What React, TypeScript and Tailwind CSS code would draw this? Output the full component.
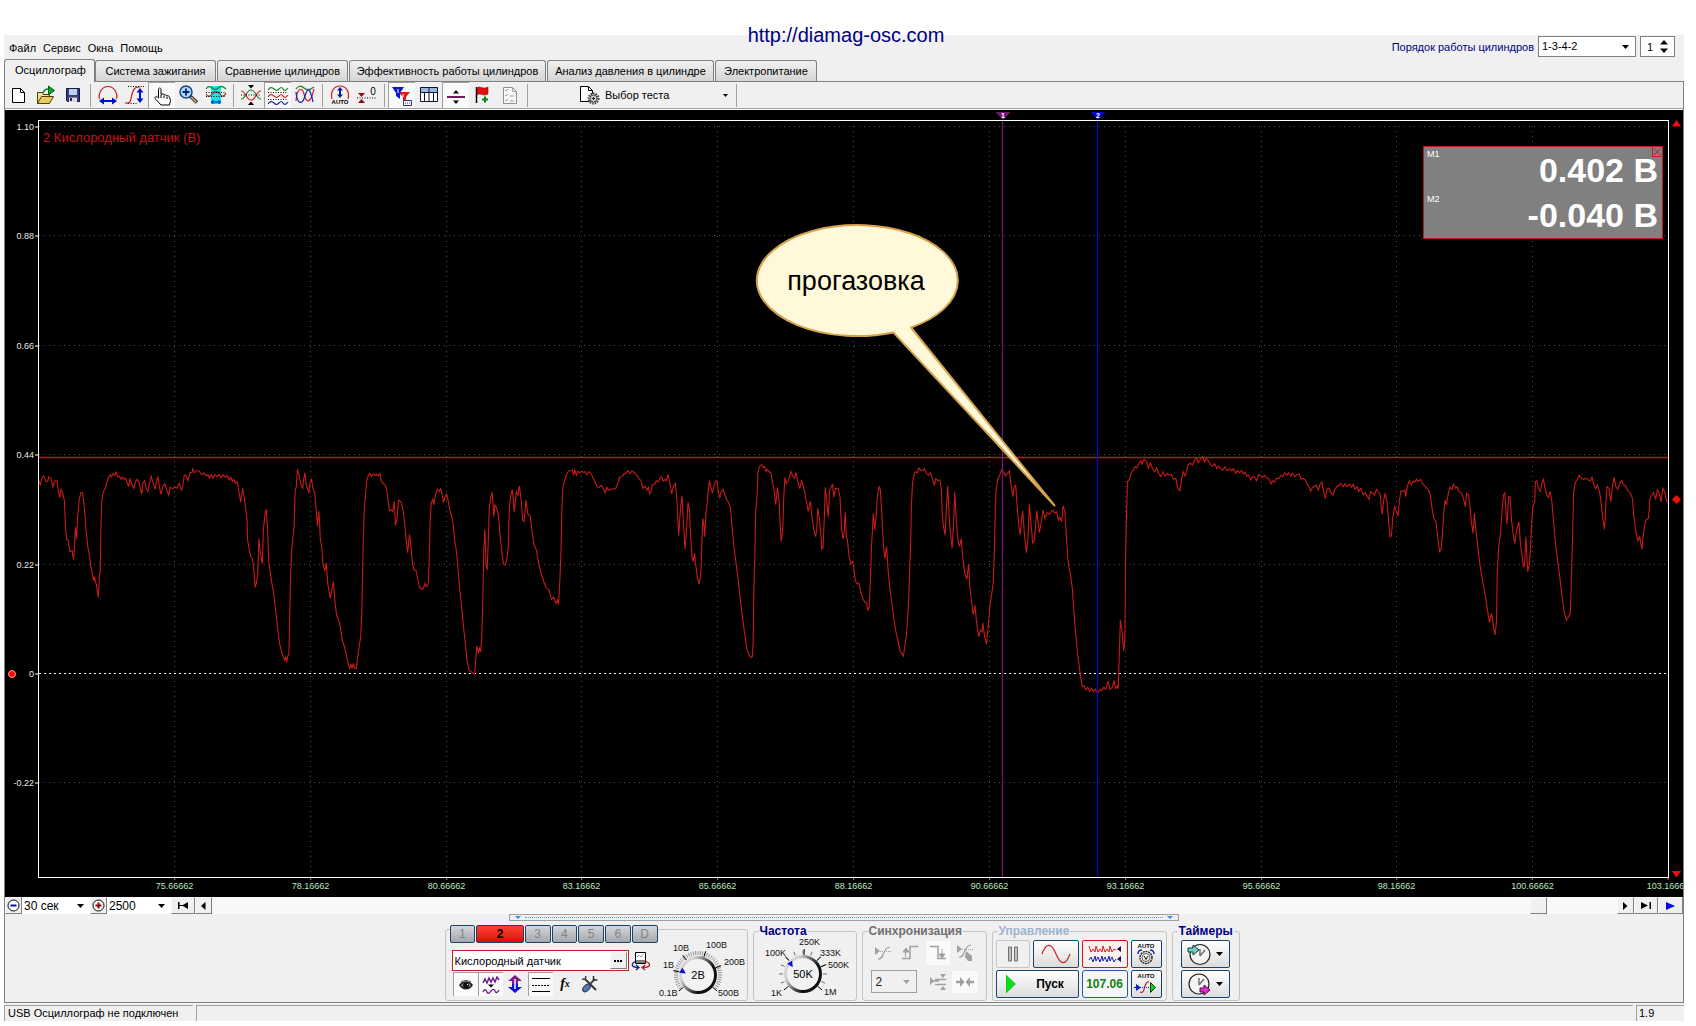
import React from "react";
import type { ReactNode } from "react";

/* ---------- chart data ---------- */

const PLOT_W = 1629;
const PLOT_H = 756;

const TRACE_A =
  "105,122 109,134 114,110 119,109 124,124 129,125 132,110 138,116 143,140 148,124 154,122 158,155 161,172 165,148 170,160 174,184 177,262 180,298 184,300 189,334 195,332 199,358 202,310 204,262 207,296 210,230 214,178 219,157 223,158 228,200 232,262 237,318 241,340 246,380 250,404 253,422 255,410 260,432 266,472 269,402 271,400 273,250 275,190 278,160 281,152 285,145 289,126 294,112 298,104 302,110 306,100 310,106 314,97 318,110 322,108 327,118 331,112 335,118 340,115 344,130 348,138 351,115 356,132 362,145 366,125 371,118 376,128 380,150 383,163 386,130 391,122 395,145 400,154 404,130 409,109 414,130 419,148 423,125 427,110 431,140 435,163 440,140 445,131 450,148 456,166 460,142 468,146 473,141 479,145 485,130 490,150 494,140 498,106 502,104 508,122 514,97 519,98 521,87 526,98 532,92 538,92 545,104 551,98 557,107 562,104 566,115 571,104 576,115 581,104 587,110 592,104 598,113 603,104 609,112 615,107 620,120 624,112 628,124 632,118 636,130 641,125 645,148 651,187 656,145 660,170 664,205 668,240 669,298 674,330 678,350 683,358 686,390 690,442 693,430 697,400 700,296 704,340 709,372 712,270 717,216 720,210 723,262 727,370 731,400 735,430 740,460 745,510 751,570 756,610 762,640 766,650 770,660 772,650 775,667 778,648 781,645 783,540 786,400 789,320 792,290 795,258 798,150 801,140 804,88 808,104 813,130 818,146 821,120 824,98 829,140 835,157 838,130 842,116 846,145 851,160 855,215 858,258 862,214 864,250 866,298 870,320 873,370 878,394 882,368 886,430 893,475 897,450 901,424 905,480 910,525 915,540 920,560 925,600 931,620 936,642 942,675 946,685 949,672 952,685 955,670 958,684 963,686 966,660 971,618 975,590 978,515 982,310 985,200 988,165 991,125 995,108 1000,100 1004,110 1008,102 1014,106 1018,103 1022,108 1027,100 1031,125 1036,130 1041,135 1046,150 1050,190 1053,212 1058,210 1062,215 1066,184 1069,256 1073,240 1077,180 1082,184 1086,190 1090,215 1095,260 1099,310 1102,338 1107,283 1111,320 1115,370 1119,390 1124,390 1129,415 1134,442 1139,448 1145,445 1149,430 1153,440 1158,432 1160,360 1163,240 1166,190 1170,178 1173,195 1178,160 1183,148 1187,155 1191,146 1195,160 1199,188 1203,170 1208,163 1213,190 1216,210 1220,225 1225,250 1229,300 1234,335 1238,380 1243,450 1248,500 1253,560 1258,610 1263,665 1268,690 1274,695 1279,700 1283,703 1286,660 1289,618 1293,638 1296,625 1299,636 1302,600 1305,500 1308,330 1311,268 1314,370 1317,390 1320,300 1323,200 1327,170 1331,157 1335,230 1338,195 1343,205 1348,230 1352,290 1357,340 1361,372 1366,375 1370,360 1374,325 1377,200 1381,165 1385,148 1390,215 1396,155 1400,165 1404,137 1409,180 1413,240 1417,245 1422,180 1427,222 1433,228 1438,270 1444,315 1450,330 1456,370 1463,400 1470,425 1476,442 1484,450 1491,478 1497,472 1503,490 1507,480 1510,492";
const TRACE_B =
  "0,415 3,320 5,210 8,140 13,120 19,100 24,92 30,92 33,90 37,104 40,90 44,106 48,94 53,98 58,94 63,97 68,95 73,104 78,95 83,100 88,110 94,125 100,140 106,142 112,136 117,145 122,158 126,142 131,150 138,148 144,146 150,146 156,132 161,112 167,110 173,102 179,98 184,92 189,101 195,92 201,98 207,104 213,115 219,122 224,145 230,138 235,150 239,142 242,162 246,155 249,136 256,132 261,122 266,125 271,114 275,110 279,124 284,118 288,122 292,104 296,124 302,162 306,140 312,130 316,180 319,250 321,287 326,200 330,168 333,230 338,328 342,270 346,187 350,210 353,290 357,350 360,365 364,340 367,375 371,410 376,432 381,400 383,320 386,235 389,255 391,290 395,215 398,190 401,150 404,122 407,140 412,157 416,140 420,124 424,122 428,155 432,172 436,155 441,148 446,165 451,180 456,188 461,204 465,260 470,320 476,370 482,420 487,475 493,530 499,580 505,625 511,645 516,653 520,650 522,610 524,455 527,340 529,210 533,160 535,100 539,80 545,74 550,82 553,80 557,95 560,88 565,95 570,98 575,130 578,145 583,194 588,142 592,180 595,250 598,305 602,270 605,170 608,112 612,130 617,122 620,115 624,94 629,108 634,115 638,98 643,125 648,146 653,122 658,138 662,160 667,190 671,214 677,184 681,230 686,270 691,290 694,270 697,205 702,240 708,328 711,325 715,220 717,142 720,170 725,230 729,150 734,140 737,132 740,172 745,145 752,146 757,170 761,265 765,296 768,280 771,215 774,290 777,300 781,345 786,372 791,365 794,380 798,420 803,432 808,430 813,455 818,475 824,486 829,490 833,512 836,500 839,430 842,320 845,260 847,220 851,270 854,235 858,170 862,140 866,148 870,220 874,310 878,356 883,320 887,390 892,450 897,490 903,540 908,575 914,605 920,635 924,640 928,648 933,615 937,580 941,510 944,430 948,310 950,200 953,130 957,105 960,95 966,98 970,84 976,92 981,92 985,86 990,100 996,106 1001,98 1006,112 1012,136 1016,116 1022,122 1027,120 1031,150 1033,220 1037,260 1041,286 1045,200 1048,137 1053,250 1060,325 1064,250 1067,157 1072,250 1076,300 1080,320 1085,296 1089,350 1094,400 1100,418 1105,372 1108,440 1112,480 1117,524 1122,496 1126,545 1132,590 1137,570 1141,575 1143,548 1148,590 1153,612 1158,560 1162,500 1168,455 1171,430 1174,340 1177,200 1179,150 1184,115 1189,105 1194,88 1199,95 1204,107 1210,100 1215,92 1219,130 1224,170 1228,140 1232,136 1236,200 1240,255 1244,284 1248,240 1251,212 1256,290 1261,338 1265,300 1269,193 1274,260 1278,310 1283,300 1286,250 1289,212 1296,278 1302,240 1306,210 1311,235 1317,218 1323,222 1328,215 1333,210 1338,220 1343,215 1347,240 1351,232 1356,245 1360,198 1365,215 1369,290 1373,360 1377,390 1381,410 1385,445 1389,510 1394,580 1399,640 1404,680 1408,715 1412,740 1417,738 1422,750 1427,742 1432,754 1437,745 1442,755 1447,748 1454,760 1460,748 1465,752 1470,742 1475,748 1482,725 1487,748 1493,742 1498,722 1502,745 1506,738 1509,747 1512,640 1515,540 1519,570 1524,634 1527,600 1528,500 1529,350 1532,200 1534,130";
const TRACE_C =
  "20,125 25,120 30,100 36,90 41,80 46,84 52,70 57,62 60,72 66,58 72,65 77,85 83,70 88,84 95,95 100,84 105,100 111,110 117,95 123,108 129,100 135,106 140,104 146,118 152,115 157,145 163,152 168,115 172,95 177,108 181,95 185,75 191,70 197,75 203,60 208,55 213,68 219,58 225,50 230,66 235,55 240,62 246,74 252,78 258,72 264,86 269,78 275,88 280,90 286,80 292,92 298,86 304,92 309,86 315,100 320,92 325,98 331,92 336,102 341,96 345,108 350,106 356,120 361,110 367,112 372,122 377,104 383,108 388,112 394,106 399,115 405,115 411,132 416,122 421,126 426,115 432,116 438,106 443,110 448,98 454,106 459,98 465,108 470,100 476,110 482,104 488,102 493,118 499,115 505,120 510,135 515,140 519,154 524,142 530,138 535,136 540,150 545,132 550,126 555,160 559,175 564,145 569,145 574,158 580,165 584,150 590,140 596,136 601,130 607,140 612,132 618,140 625,133 630,142 635,133 640,148 645,140 650,154 656,145 662,165 668,158 674,170 678,178 682,155 688,160 693,165 698,148 704,155 709,165 711,200 714,222 718,180 722,160 727,185 731,240 735,290 739,288 743,230 748,200 753,215 757,228 761,180 765,152 770,155 775,150 778,170 782,140 788,122 793,135 798,124 803,126 807,118 812,124 818,118 823,130 829,138 835,145 840,150 845,165 849,200 854,235 860,245 865,290 870,335 874,330 878,280 882,210 885,180 889,195 893,165 898,142 904,148 908,133 914,145 918,140 923,155 930,160 935,175 940,200 944,160 949,165 953,200 957,250 961,280 965,220 969,270 975,330 982,390 989,435 995,470 1001,515 1006,548 1011,520 1015,545 1018,570 1021,585 1025,545 1027,400 1031,320 1036,280 1040,215 1044,165 1048,158 1051,220 1054,252 1058,170 1062,170 1066,240 1071,285 1075,310 1080,270 1086,245 1090,310 1095,350 1098,380 1101,378 1105,290 1110,395 1115,370 1118,320 1121,250 1124,200 1129,185 1131,125 1135,122 1139,145 1144,154 1149,130 1153,118 1157,145 1162,165 1166,172 1171,155 1176,185 1180,240 1185,305 1190,350 1196,400 1202,455 1209,515 1215,540 1221,530 1226,520 1230,380 1233,250 1235,160 1239,130 1244,120 1250,106 1256,115 1262,118 1269,115 1275,120 1280,122 1285,112 1290,135 1295,146 1300,135 1306,158 1310,190 1315,240 1319,268 1323,190 1326,140 1331,145 1336,185 1341,140 1345,112 1350,140 1355,148 1360,132 1365,122 1370,132 1377,140 1383,152 1389,158 1395,175 1399,230 1404,275 1410,302 1415,290 1421,328 1426,270 1432,240 1439,235 1443,175 1448,165 1453,158 1458,178 1463,150 1468,160 1473,185 1478,145 1483,155 1487,180 1491,188";

/* Sample blocks share the vertical scale; each has its own time origin. */
function toPlot(block: string, originX: number, scaleX: number) {
  return block.split(" ").map((pair) => {
    const [x, y] = pair.split(",").map(Number);
    return `${(originX + x * scaleX).toFixed(1)},${(319 + y / 3).toFixed(1)}`;
  });
}
const TRACE = [
  ...toPlot(TRACE_A, -39, 0.3699),
  ...toPlot(TRACE_B, 521, 0.3699),
  ...toPlot(TRACE_C, 1081, 0.3673),
].join(" ");

const Y_AXIS = [
  { label: "1.10", y: 5.5 },
  { label: "0.88", y: 114.5 },
  { label: "0.66", y: 224.5 },
  { label: "0.44", y: 333.5 },
  { label: "0.22", y: 443.5 },
  { label: "0", y: 552.5 },
  { label: "-0.22", y: 661.5 },
];
const X_AXIS = [
  { label: "75.66662", x: 135.5 },
  { label: "78.16662", x: 271.5 },
  { label: "80.66662", x: 407.5 },
  { label: "83.16662", x: 542.5 },
  { label: "85.66662", x: 678.5 },
  { label: "88.16662", x: 814.5 },
  { label: "90.66662", x: 950.5 },
  { label: "93.16662", x: 1086.5 },
  { label: "95.66662", x: 1222.5 },
  { label: "98.16662", x: 1357.5 },
  { label: "100.66662", x: 1493.5 },
  { label: "103.16662", x: 1629 },
];
const MARKERS = [
  { id: "1", x: 963.5, color: "#701a70" },
  { id: "2", x: 1058.5, color: "#0808d0" },
];
const pct = (v: number, total: number) => `${(v / total) * 100}%`;

/* ---------- small parts ---------- */

function Icon({ w = 24, h = 22, children }: { w?: number; h?: number; children: ReactNode }) {
  return (
    <svg width={w} height={h} viewBox={`0 0 ${w} ${h}`} fill="none" className="shrink-0" aria-hidden="true">
      {children}
    </svg>
  );
}

function Down({ color = "#000" }: { color?: string }) {
  return (
    <Icon w={7} h={4}>
      <path d="M0 0h7L3.500 4z" fill={color} />
    </Icon>
  );
}

function ToolButton({ label, pressed, children }: { label: string; pressed?: boolean; children: ReactNode }) {
  return (
    <button
      type="button"
      aria-label={label}
      aria-pressed={pressed}
      className={
        pressed
          ? "flex h-[26px] w-[27px] items-center justify-center border-l border-t border-[#a0a0a0] bg-[#fafafa]"
          : "flex h-[26px] w-[27px] items-center justify-center"
      }
    >
      {children}
    </button>
  );
}

function Sep() {
  return (
    <div className="flex w-2 justify-center py-[2px]">
      <div className="w-px bg-[#a0a0a0]" />
    </div>
  );
}

/* ---------- header ---------- */

function Header() {
  return (
    <header className="flex h-6 items-start justify-between bg-[#f0f0f0]">
      <nav className="flex gap-[7px] pl-[5px] pt-[6px]" aria-label="Меню">
        {["Файл", "Сервис", "Окна", "Помощь"].map((m) => (
          <button key={m} type="button" className="leading-[14px]">
            {m}
          </button>
        ))}
      </nav>
      <div className="flex items-center gap-1 pr-[9px] pt-px">
        <label htmlFor="order" className="text-[#000080]">
          Порядок работы цилиндров
        </label>
        <span className="relative flex h-[21px] w-[98px] items-center border border-[#808080] bg-white">
          <select id="order" className="h-full w-full appearance-none bg-transparent px-[3px] pb-[2px] outline-none">
            <option>1-3-4-2</option>
          </select>
          <span className="pointer-events-none absolute right-[6px]">
            <Down />
          </span>
        </span>
        <span className="flex h-[21px] w-[35px] items-center justify-between border border-[#808080] bg-white pl-[6px] pr-[6px]">
          <input aria-label="Номер" defaultValue="1" className="w-3 bg-transparent outline-none" />
          <Icon w={8} h={13}>
            <path d="M0 4.500h8L4 0zM0 8.500h8L4 13z" fill="#000" />
          </Icon>
        </span>
      </div>
    </header>
  );
}

const TABS: [string, string][] = [
  ["Система зажигания", "w-[121px]"],
  ["Сравнение цилиндров", "w-[131px]"],
  ["Эффективность работы цилиндров", "w-[197px]"],
  ["Анализ давления в цилиндре", "w-[167px]"],
  ["Электропитание", "w-[102px]"],
];

function Tabs() {
  return (
    <div role="tablist" className="flex h-[23px] items-end bg-[#f0f0f0]">
      <button
        type="button"
        role="tab"
        aria-selected="true"
        className="h-[23px] w-[91px] rounded-t-[3px] border border-b-0 border-[#808080] bg-[#f0f0f0] pb-[2px] pl-[2px]"
      >
        Осциллограф
      </button>
      <div className="flex h-full grow items-end gap-px border-b border-[#808080]">
        {TABS.map(([t, w]) => (
          <button
            key={t}
            type="button"
            role="tab"
            aria-selected="false"
            className={`${w} h-[21px] rounded-t-[3px] border border-b-0 border-[#808080] bg-linear-to-b from-[#f2f2f2] to-[#d4d4d4]`}
          >
            {t}
          </button>
        ))}
      </div>
    </div>
  );
}

/* ---------- toolbar ---------- */

function Toolbar() {
  return (
    <div className="flex h-7 shrink-0 border-b border-b-white bg-[#f0f0f0] shadow-[inset_0_-1px_0_#a0a0a0]" role="toolbar">
      <ToolButton label="Новый">
        <Icon>
          <path d="M5.500 4.500h8l4 4v10h-12z" fill="#fff" stroke="#000" />
          <path d="M13.500 4.500v4h4" stroke="#000" />
        </Icon>
      </ToolButton>
      <ToolButton label="Открыть">
        <Icon>
          <path d="M3.500 19.500v-11h5l1 2h6v3" fill="#e8e0a0" stroke="#504000" />
          <path d="M3.500 19.500l4-7h12l-4 7z" fill="#e8cc60" stroke="#504000" />
          <path d="M14.500 2v9l6-4.500z" fill="#10a030" stroke="#006018" />
          <path d="M9 9c1-3 3-4 5-4" stroke="#108030" strokeWidth="1.500" />
        </Icon>
      </ToolButton>
      <ToolButton label="Сохранить">
        <Icon>
          <path d="M5.500 4.500h13v13h-12l-1-1z" fill="#383c78" stroke="#101840" />
          <path d="M8 5h8v6H8z" fill="#c0d0f4" />
          <path d="M8 13.500h8V18H8z" fill="#dcdcdc" />
          <path d="M9 14h2v3H9z" fill="#202850" />
        </Icon>
      </ToolButton>
      <Sep />
      <ToolButton label="По ширине">
        <Icon>
          <path d="M3.500 15C2 9 6 2.500 12 2.500S22 9 20.500 15" stroke="#d01818" strokeWidth="1.200" />
          <path d="M3 17l5-3.500v2.500h8v-2.500l5 3.500-5 3.500V18H8v2.500z" fill="#0010c8" />
        </Icon>
      </ToolButton>
      <ToolButton label="По высоте">
        <Icon>
          <path d="M5 2.500h16M5 19.500h10" stroke="#000" strokeDasharray="1 1.500" />
          <path d="M2 19c7 1 5-3 7-9s3-7 8-7" stroke="#d01818" strokeWidth="1.200" />
          <path d="M17 4l3.500 4.500H18v6h2.500L17 19l-3.500-4.500H16v-6h-2.500z" fill="#0010c8" />
        </Icon>
      </ToolButton>
      <ToolButton label="Рука" pressed>
        <Icon>
          <path
            d="M8.500 13V4.500c0-2 2.500-2 2.500 0v5l1-.5c1-.5 2 0 2 1 1-.6 2.200-.3 2.500.7 1.500-.4 2.500.3 3 1.500l1 3.300-1 4.500H11L5.500 14c-1.500-2 .5-3.500 3-1z"
            fill="#fff"
            stroke="#000"
          />
          <path d="M11 10v3M14 10.500V13M17 11.500V14" stroke="#000" />
        </Icon>
      </ToolButton>
      <ToolButton label="Увеличить">
        <Icon>
          <path d="M12.500 11.500l7.500 7" stroke="#303030" strokeWidth="3.500" />
          <path d="M14 13l5.500 5.300" stroke="#e0b070" strokeWidth="1.500" />
          <circle cx="9" cy="8" r="6" fill="#a8dcf8" stroke="#204080" strokeWidth="1.500" />
          <path d="M5.500 8h7M9 4.500v7" stroke="#102070" strokeWidth="1.800" />
        </Icon>
      </ToolButton>
      <ToolButton label="Фрагмент">
        <Icon>
          <path d="M7 2h10v18H7z" fill="#10e8f0" />
          <path d="M2 5c2-3 4-3 6-1s4 2 6 0 5-2 8 1" stroke="#188028" strokeWidth="1.300" />
          <path d="M2 10c2 3 4 3 6 0s6-3 8 0 4 3 6-1" stroke="#d02020" strokeWidth="1.300" />
          <path d="M2 8.500h20M2 12.500h20" stroke="#000" strokeDasharray="1 1.500" />
          <path d="M7.500 18h9M9.500 16l-2 2 2 2M14.500 16l2 2-2 2" stroke="#0010a0" />
        </Icon>
      </ToolButton>
      <Sep />
      <ToolButton label="Совместить">
        <Icon>
          <path d="M2 15c5 0 5-9 10-9s5 9 10 9" stroke="#188028" strokeWidth="1.200" />
          <path d="M2 7c5 0 5 9 10 9s5-9 10-9" stroke="#d02020" strokeWidth="1.200" />
          <path d="M2 11h20" stroke="#000" strokeDasharray="1 1.500" />
          <path d="M9 1h6l-3 3.500zM9 21h6l-3-3.500z" fill="#000" />
        </Icon>
      </ToolButton>
      <ToolButton label="Разнести" pressed>
        <Icon>
          <path d="M2 5c2-3 4-3 6-1s3 2 5 0 3-2 4 0 3 2 5-1" stroke="#188028" strokeWidth="1.200" />
          <path d="M2 12c2-3 4-3 6-1s3 2 5 0 3-2 4 0 3 2 5-1" stroke="#d02020" strokeWidth="1.200" />
          <path d="M2 19c2-3 4-3 6-1s3 2 5 0 3-2 4 0 3 2 5-1" stroke="#1020b0" strokeWidth="1.200" />
          <path d="M2 7.500h20M2 14.500h20" stroke="#000" strokeDasharray="1 1.500" />
        </Icon>
      </ToolButton>
      <ToolButton label="Наложить">
        <Icon>
          <path d="M3 5c2-3 5-4 8-1s6 2 10-1" stroke="#188028" strokeWidth="1.200" />
          <path d="M3 17C4 4 9 2 11 10s6 12 10-5" stroke="#d02020" strokeWidth="1.200" />
          <path d="M3 8c1 12 6 14 9 4s5-8 8 6" stroke="#1020b0" strokeWidth="1.200" />
        </Icon>
      </ToolButton>
      <Sep />
      <ToolButton label="Авто масштаб">
        <Icon>
          <path d="M4 15C2 8 6 2 12 2s10 6 8 13" stroke="#d02020" strokeWidth="1.200" />
          <path d="M12 3l3 3.500h-2v4h2L12 14l-3-3.500h2v-4H9z" fill="#102090" />
          <text x="12" y="20" textAnchor="middle" fontSize="6" fontWeight="bold" fill="#000">AUTO</text>
        </Icon>
      </ToolButton>
      <ToolButton label="Ноль">
        <Icon>
          <path d="M3 9h7L6.500 13zM3 19h7l-3.500-4z" fill="#900c0c" />
          <path d="M2 14h20" stroke="#000" strokeDasharray="1 1.500" />
          <text x="18" y="11" textAnchor="middle" fontSize="10" fill="#000">0</text>
        </Icon>
      </ToolButton>
      <Sep />
      <ToolButton label="Фильтр" pressed>
        <Icon>
          <path d="M8 7h12l-4 5v6h-3v-6z" fill="#e01818" />
          <path d="M2 2h12l-4 6v6l-4-3V8z" fill="#0818d0" />
          <path d="M8 4v4M13 9v3" stroke="#fff" />
          <path d="M13.500 15.500h8v5h-8z" fill="#fff" stroke="#303080" />
          <path d="M15 18h5" stroke="#303080" strokeDasharray="1 1" />
        </Icon>
      </ToolButton>
      <ToolButton label="Таблица">
        <Icon>
          <path d="M3.500 3.500h17v14h-17z" fill="#fff" stroke="#101030" />
          <path d="M4 4h16v4H4z" fill="#98b8e0" />
          <path d="M4 8.500h16M7.500 8v10M12 4v14M16.500 8v10" stroke="#101030" />
        </Icon>
      </ToolButton>
      <ToolButton label="Разделить" pressed>
        <Icon>
          <path d="M3 12h18" stroke="#701a60" strokeWidth="2" />
          <path d="M9 8.500h6L12 5zM9 15.500h6L12 19z" fill="#000" />
        </Icon>
      </ToolButton>
      <ToolButton label="Добавить флаг">
        <Icon>
          <path d="M5.500 3v16" stroke="#000" strokeWidth="1.500" />
          <path d="M6 4c3-3 5 2 11-1v7c-5 3-8-2-11 1z" fill="#e01010" stroke="#700" strokeWidth=".5" />
          <path d="M11 15.500h6M14 12.500v6" stroke="#088018" strokeWidth="2" />
        </Icon>
      </ToolButton>
      <ToolButton label="Список">
        <Icon>
          <path d="M5.500 3.500h9l4 4v12h-13z" fill="#f8f8f8" stroke="#909090" />
          <path d="M14.500 3.500v4h4M7 6l1 1 2-2M7 11l1 1 2-2M7 16l1 1 2-2M12 12h4M12 17h4" stroke="#a0a0a0" />
        </Icon>
      </ToolButton>
      <Sep />
      <button type="button" className="flex h-[26px] w-[201px] items-center pl-[48px] pr-1">
        <Icon w={22}>
          <path d="M1.500 2.500h8l4 4v11h-12z" fill="#fff" stroke="#000" />
          <path d="M9.500 2.500v4h4" stroke="#000" />
          <circle cx="14.500" cy="14.500" r="5" fill="#e0e0e0" stroke="#404040" strokeWidth="2" strokeDasharray="1.500 1" />
          <circle cx="14.500" cy="14.500" r="3.500" fill="#d0d0d0" stroke="#404040" />
          <path d="M14.500 13v3M13 14.500h3" stroke="#202020" />
        </Icon>
        <span className="grow pl-1 text-left">Выбор теста</span>
        <Icon w={5} h={3}>
          <path d="M0 0h5L2.500 3z" fill="#000" />
        </Icon>
      </button>
      <Sep />
    </div>
  );
}

/* ---------- chart ---------- */

function Meter() {
  return (
    <div className="absolute right-[5px] top-[25px] h-[93px] w-[240px] border border-[#c01818] bg-[#808080] text-white">
      <button type="button" aria-label="Закрыть" className="absolute right-0 top-0">
        <Icon w={10} h={10}>
          <path d="M.5 0v9.500H10M2 1.500l6.500 6.500M8.500 1.500L2 8" stroke="#d01818" />
        </Icon>
      </button>
      {[
        ["M1", "0.402 В"],
        ["M2", "-0.040 В"],
      ].map(([k, v]) => (
        <div key={k} className="flex h-[45px] justify-between pl-[3px] pr-1">
          <span className="text-[9px] leading-[14px]">{k}</span>
          <span className="pt-[3px] text-[34px] font-bold leading-10">{v}</span>
        </div>
      ))}
    </div>
  );
}

function Callout() {
  return (
    <svg
      width="310"
      height="290"
      viewBox="0 0 310 290"
      className="absolute"
      style={{ left: pct(711, PLOT_W), top: pct(99, PLOT_H) }}
    >
      <path
        d="M161 107.500A100.500 55.500 0 1 0 143.300 112.400L304.500 285.500Z"
        fill="#fff9d9"
        stroke="#d6a24c"
        strokeWidth="2"
        strokeLinejoin="round"
      />
      <text x="106" y="70" textAnchor="middle" fontSize="27" fill="#000">
        прогазовка
      </text>
    </svg>
  );
}

function Plot() {
  return (
    <div className="relative min-h-0 min-w-0 border border-white">
      <svg viewBox={`0 0 ${PLOT_W} ${PLOT_H}`} preserveAspectRatio="none" className="absolute inset-0 h-full w-full">
        <g stroke="#4c4c4c" strokeDasharray="1 4">
          {Y_AXIS.filter((t) => t.label !== "0").map((t) => (
            <line key={t.label} x1="0" x2={PLOT_W} y1={t.y} y2={t.y} />
          ))}
          {X_AXIS.slice(0, -1).map((t) => (
            <line key={t.label} x1={t.x} x2={t.x} y1="5" y2={PLOT_H} />
          ))}
        </g>
        <line x1="0" x2={PLOT_W} y1="552.5" y2="552.5" stroke="#fff" strokeDasharray="2 3" />
        <line x1="0" x2={PLOT_W} y1="336.500" y2="336.500" stroke="#b01c1c" strokeWidth="1.400" />
        <polyline points={TRACE} fill="none" stroke="#c81c18" strokeWidth="1.100" vectorEffect="non-scaling-stroke" />
        {MARKERS.map((m) => (
          <line key={m.id} x1={m.x} x2={m.x} y1="0" y2={PLOT_H} stroke={m.color} strokeWidth="1.200" />
        ))}
      </svg>
      <span className="absolute left-1 top-[9px] text-[13px] leading-4 text-[#c81414]">2 Кислородный датчик (В)</span>
      <Callout />
      <Meter />
    </div>
  );
}

function Chart() {
  return (
    <section className="grid min-h-[300px] grow grid-cols-[33px_minmax(0,1fr)_14px] grid-rows-[10px_minmax(0,1fr)_19px] overflow-hidden bg-black text-[9px] leading-none text-[#e8e8e8]">
      <div />
      <div className="relative mx-px">
        {MARKERS.map((m) => (
          <svg
            key={m.id}
            width="15"
            height="9"
            viewBox="0 0 15 9"
            className="absolute bottom-0 -translate-x-1/2"
            style={{ left: pct(m.x, PLOT_W) }}
          >
            <path d="M0 1h15L7.500 9z" fill={m.color} />
            <text x="7.500" y="7" textAnchor="middle" fontSize="7" fontWeight="bold" fill="#fff">
              {m.id}
            </text>
          </svg>
        ))}
      </div>
      <div />

      <div className="relative my-px">
        {Y_AXIS.map((t) => (
          <div
            key={t.label}
            className="absolute right-0 flex h-[9px] -translate-y-1/2 items-center gap-px"
            style={{ top: pct(t.y, PLOT_H) }}
          >
            <span className="leading-[9px]">{t.label}</span>
            <span className="h-px w-[3px] bg-white" />
          </div>
        ))}
        <span
          className="absolute left-[3px] size-2 -translate-y-1/2 rounded-full border border-[#ff9a8a] bg-[#f01008]"
          style={{ top: pct(552.5, PLOT_H) }}
        />
      </div>
      <Plot />
      <div className="flex flex-col items-center justify-between">
        <Icon w={9} h={7}>
          <path d="M0 6.500h9L4.500 0z" fill="#f01008" />
        </Icon>
        <Icon w={9} h={9}>
          <path d="M4.500 0L9 4.500 4.500 9 0 4.500z" fill="#f01008" />
        </Icon>
        <Icon w={9} h={7}>
          <path d="M0 0h9L4.500 6.500z" fill="#f01008" />
        </Icon>
      </div>

      <div />
      <div className="relative mx-px text-[#bfe8bf]">
        {X_AXIS.map((t) => (
          <div
            key={t.label}
            className="absolute top-0 flex -translate-x-1/2 flex-col items-center gap-[2px]"
            style={{ left: pct(t.x, PLOT_W) }}
          >
            <span className="h-[2px] w-px bg-[#909090]" />
            {t.label}
          </div>
        ))}
      </div>
      <div />
    </section>
  );
}

/* ---------- scroll row ---------- */

const RAISED = "flex h-[17px] items-center justify-center border border-[#f8f8f8] border-b-[#808080] border-r-[#808080] bg-[#f0f0f0]";

function ScaleSelect({ label, value, width }: { label: string; value: string; width: string }) {
  return (
    <span className={`relative flex h-[17px] items-center bg-white ${width}`}>
      <select aria-label={label} className="h-full w-full appearance-none bg-transparent px-[2px] text-[12px] outline-none">
        <option>{value}</option>
      </select>
      <span className="pointer-events-none absolute right-[6px]">
        <Down />
      </span>
    </span>
  );
}

function ScrollRow() {
  return (
    <div className="flex h-[17px] shrink-0 bg-[#f8f8f8]">
      <button type="button" aria-label="Уменьшить" className={`${RAISED} w-[17px]`}>
        <Icon w={13} h={13}>
          <circle cx="6.500" cy="6.500" r="5.500" fill="#fff" stroke="#000" />
          <path d="M3.500 6.500h6" stroke="#0010a0" strokeWidth="2" />
        </Icon>
      </button>
      <ScaleSelect label="Развёртка" value="30 сек" width="w-[68px]" />
      <button type="button" aria-label="Увеличить" className={`${RAISED} w-[17px]`}>
        <Icon w={13} h={13}>
          <circle cx="6.500" cy="6.500" r="5.500" fill="#fff" stroke="#000" />
          <path d="M3.500 6.500h6M6.500 3.500v6" stroke="#900808" strokeWidth="2" />
        </Icon>
      </button>
      <ScaleSelect label="Точек" value="2500" width="w-[64px]" />
      <button type="button" aria-label="В начало" className={`${RAISED} w-6`}>
        <Icon w={10} h={7}>
          <path d="M0 0h1.500v7H0zM10 0v7L4 3.500zM1 3h4v1H1z" fill="#000" />
        </Icon>
      </button>
      <button type="button" aria-label="Назад" className={`${RAISED} w-[17px]`}>
        <Icon w={5} h={8}>
          <path d="M4.500 0v8L0 4z" fill="#000" />
        </Icon>
      </button>
      <div className="flex grow justify-end pr-[70px]">
        <button type="button" aria-label="Ползунок" className={`${RAISED} w-[17px]`} />
      </div>
      <button type="button" aria-label="Вперёд" className={`${RAISED} w-[17px]`}>
        <Icon w={5} h={8}>
          <path d="M0 0v8l4.500-4z" fill="#000" />
        </Icon>
      </button>
      <button type="button" aria-label="В конец" className={`${RAISED} w-6`}>
        <Icon w={10} h={7}>
          <path d="M8.500 0H10v7H8.500zM0 0v7l7-3.500z" fill="#000" />
        </Icon>
      </button>
      <button type="button" aria-label="Воспроизвести" className={`${RAISED} w-[25px]`}>
        <Icon w={9} h={8}>
          <path d="M0 0v8l9-4z" fill="#0808e0" />
        </Icon>
      </button>
    </div>
  );
}

/* ---------- control panel ---------- */

const CHANNEL = "h-[18px] w-[26px] rounded-[2px] border border-[#1c4468] bg-linear-to-b from-[#d4d8dc] to-[#a4a8ac] text-[12px] leading-none text-[#808488]";

function Dial({
  name,
  value,
  pointer,
  labels,
  dense,
  width,
  cx,
}: {
  name: string;
  value: string;
  pointer: number;
  labels: [string, number, number, number][];
  dense?: boolean;
  width: number;
  cx: number;
}) {
  const cy = 45;
  const at = (deg: number, r: number): [number, number] => [
    cx + r * Math.sin((deg * Math.PI) / 180),
    cy - r * Math.cos((deg * Math.PI) / 180),
  ];
  const step = dense ? 6 : 22.5;
  const ticks: number[] = [];
  for (let d = dense ? -126 : -112.5; d <= 127; d += step) ticks.push(d);
  const [px, py] = at(pointer, 15);
  return (
    <svg width={width} height="70" viewBox={`0 0 ${width} 70`} role="img" aria-label={`${name} ${value}`} className="shrink-0">
      <defs>
        <linearGradient id={`rim-${name}`} x1="0" y1="0.2" x2="1" y2="0.8">
          <stop offset="0.2" stopColor="#d4d4d4" />
          <stop offset="0.7" stopColor="#101010" />
        </linearGradient>
      </defs>
      {ticks.map((d) => {
        const [x1, y1] = at(d, 20);
        const [x2, y2] = at(d, 24);
        return <line key={d} x1={x1} y1={y1} x2={x2} y2={y2} stroke={dense ? "#909090" : "#707070"} />;
      })}
      {labels.map(([t, , , d]) => {
        const [x1, y1] = at(d, 19);
        const [x2, y2] = at(d, 25);
        return <line key={t} x1={x1} y1={y1} x2={x2} y2={y2} stroke="#000" />;
      })}
      <circle cx={cx} cy={cy} r="17.500" fill="#f2f2f2" stroke={`url(#rim-${name})`} strokeWidth="3" />
      <path d="M-3 -3h6L0 3z" transform={`translate(${px} ${py}) rotate(${pointer + 20})`} fill="#0810d0" />
      {labels.map(([t, x, y]) => (
        <text key={t} x={x} y={y} fontSize="9" fill="#101010">
          {t}
        </text>
      ))}
      <text x={cx} y={cy + 4} textAnchor="middle" fontSize="11" fill="#000">
        {value}
      </text>
    </svg>
  );
}

const SMALL = "flex h-6 w-[25px] items-center justify-center";
const SMALL_ON = "flex h-6 w-[25px] items-center justify-center border-l border-t border-[#a0a0a0] bg-[#fafafa]";

function ChannelGroup() {
  return (
    <div className="mt-1 flex h-[72px] w-[303px] rounded-[3px] border border-[#c4c4c4]">
      <div className="-mt-[5px] w-[212px] shrink-0 pl-1">
        <div className="flex gap-px bg-[#f0f0f0]">
          <button type="button" className={CHANNEL}>1</button>
          <button
            type="button"
            className="h-[18px] w-12 rounded-[2px] border border-[#1c4468] bg-linear-to-b from-[#ff4030] to-[#d80808] text-[12px] font-bold leading-none"
          >
            2
          </button>
          {["3", "4", "5", "6", "D"].map((c) => (
            <button key={c} type="button" className={CHANNEL}>
              {c}
            </button>
          ))}
        </div>
        <div className="mt-[7px] flex items-center gap-[2px] pl-[2px]">
          <div className="flex h-[21px] w-[177px] items-center border border-[#c02020] bg-white pl-[2px] pr-px">
            <input aria-label="Датчик" defaultValue="Кислородный датчик" className="min-w-0 grow bg-transparent outline-none" />
            <button type="button" aria-label="Выбрать датчик" className={`${RAISED} w-[17px]`}>
              <Icon w={8} h={2}>
                <path d="M0 0h2v2H0zM3 0h2v2H3zM6 0h2v2H6z" fill="#000" />
              </Icon>
            </button>
          </div>
          <button type="button" aria-label="Поменять каналы">
            <Icon w={20} h={20}>
              <path d="M4.500 1.500h10v11h-10z" fill="#fff" stroke="#000" />
              <path d="M5 9h9v3H5z" fill="#808080" />
              <path d="M6 6l2-2 2 2 3-3" stroke="#404040" strokeDasharray="1 1" />
              <path d="M4 10.500c-4 2-4 6 3 6M5 14l3 2.500-3 2.500" stroke="#102080" strokeWidth="1.300" />
              <path d="M15 10.500c5 2 5 6-3 6M14 14l-3 2.500 3 2.500" stroke="#c01818" strokeWidth="1.300" />
            </Icon>
          </button>
        </div>
        <div className="mt-px flex pl-[3px]">
          <button type="button" aria-label="Показать" className={SMALL_ON}>
            <Icon w={14} h={12}>
              <path d="M1 6c3-4 9-4 12 0-3 5-9 5-12 0z" fill="#909090" stroke="#202020" strokeWidth="1.500" />
              <circle cx="7" cy="6.500" r="3" fill="#101010" />
              <path d="M8 5h1v1H8z" fill="#fff" />
              <path d="M2 3c3-2 7-2 10 0" stroke="#505050" />
            </Icon>
          </button>
          <button type="button" aria-label="Сглаживание" className={SMALL_ON}>
            <Icon w={18} h={18}>
              <path d="M1 7l2-4 2 4 2-5 2 4 2-4 2 4 2-5 2 3" stroke="#701a90" strokeWidth="1.500" />
              <path d="M6 8.500h6L9 11.500z" fill="#000" />
              <path d="M1 16c1-3 3-3 4 0s3 0 4-1 3-3 4 0 3 1 4-1" stroke="#701a90" strokeWidth="1.300" />
            </Icon>
          </button>
          <button type="button" aria-label="Смещение" className={SMALL}>
            <Icon w={16} h={20}>
              <path d="M8 19l7-6h-4V9H5v4H1z" fill="#1010d8" />
              <path d="M8 1l7 6h-4v3H5V7H1z" fill="#801a90" />
              <path d="M8 5v10" stroke="#f0f0f0" strokeWidth="1.500" />
            </Icon>
          </button>
          <button type="button" aria-label="Линии" className={SMALL_ON}>
            <Icon w={18} h={16}>
              <path d="M0 1.500h18M0 14.500h18" stroke="#000" strokeWidth="1.200" />
              <path d="M0 8.500h18" stroke="#000" strokeDasharray="2 1" />
            </Icon>
          </button>
          <button type="button" aria-label="Функция" className={`${SMALL} font-['Liberation_Serif',serif] text-[14px] font-bold italic`}>
            f<span className="text-[10px]">x</span>
          </button>
          <button type="button" aria-label="Настройки" className={SMALL}>
            <Icon w={18} h={18}>
              <path d="M4 4l11 11" stroke="#303030" strokeWidth="1.800" />
              <path d="M14 4L8 10" stroke="#404040" strokeWidth="1.800" />
              <path d="M12.500 1v4h4" stroke="#303030" strokeWidth="1.500" />
              <ellipse cx="5.500" cy="13" rx="4.500" ry="2.800" transform="rotate(-45 5.500 13)" fill="#5878b0" stroke="#203050" />
              <path d="M1 4l3 .5L5 1" stroke="#404040" strokeWidth="1.500" />
            </Icon>
          </button>
        </div>
      </div>
      <Dial
        name="Напряжение"
        value="2В"
        pointer={-78}
        width={89}
        cx={40}
        dense
        labels={[
          ["0.1В", 1, 66, -130],
          ["1В", 5, 38, -80],
          ["10В", 15, 21, -38],
          ["100В", 48, 18, 18],
          ["200В", 66, 35, 68],
          ["500В", 60, 66, 130],
        ]}
      />
    </div>
  );
}

function Group({ title, tone, width, children }: { title: string; tone: string; width: string; children: ReactNode }) {
  return (
    <fieldset className={`h-[76px] min-w-0 rounded-[3px] border border-[#c4c4c4] px-1 ${width}`}>
      <legend className={`ml-px px-px text-[12px] font-bold leading-[12px] ${tone}`}>{title}</legend>
      {children}
    </fieldset>
  );
}

const GREY = "#a0a0a0";
const CTRL = "flex h-7 items-center justify-center rounded-[2px] border border-[#1c4468] bg-linear-to-b from-white to-[#dcdcdc]";

function SyncGroup() {
  const cell = "flex h-6 w-6 items-center justify-center";
  return (
    <Group title="Синхронизация" tone="text-[#707070]" width="w-[125px]">
      <div className="flex justify-between px-1 pt-[4px]">
        <button type="button" disabled aria-label="Уровень" className={cell}>
          <Icon w={18} h={18}>
            <path d="M1 3l5 4-5 4z" fill={GREY} />
            <path d="M4 15c7 1 4-12 12-12" stroke={GREY} strokeWidth="1.200" />
            <path d="M6 7.500h12" stroke={GREY} strokeDasharray="1 1" />
          </Icon>
        </button>
        <button type="button" disabled aria-label="Фронт" className={cell}>
          <Icon w={18} h={18}>
            <path d="M1 14.500h8v-12h8" stroke={GREY} strokeWidth="1.500" />
            <path d="M5 4l3 4H2zM4.500 8v5" fill={GREY} stroke={GREY} />
          </Icon>
        </button>
        <button type="button" disabled aria-label="Спад" className={`${cell} bg-[#fafafa]`}>
          <Icon w={18} h={18}>
            <path d="M1 2.500h8v12h8" stroke={GREY} strokeWidth="1.500" />
            <path d="M13 14l3-4h-6zM13 5v5" fill={GREY} stroke={GREY} />
          </Icon>
        </button>
        <button type="button" disabled aria-label="Ручная" className={cell}>
          <Icon w={18} h={20}>
            <path d="M1 2l5 4-5 4z" fill={GREY} />
            <path d="M3 14c7 1 4-12 12-12" stroke={GREY} strokeWidth="1.200" />
            <path d="M6 6.500h12" stroke={GREY} strokeDasharray="1 1" />
            <path d="M10 8l6 5v5h-4l-3-4z" fill={GREY} />
          </Icon>
        </button>
      </div>
      <div className="flex items-center px-1 pt-[5px]">
        <span className="relative mr-2 flex h-[23px] w-[47px] items-center border border-[#a0a0a0]">
          <select
            aria-label="Канал синхронизации"
            disabled
            className="h-full w-full appearance-none bg-transparent px-1 text-[12px] text-[#202020] opacity-100 outline-none"
          >
            <option>2</option>
          </select>
          <span className="pointer-events-none absolute right-[6px]">
            <Down color="#a0a0a0" />
          </span>
        </span>
        <button type="button" disabled aria-label="Порог" className="flex h-[22px] w-7 items-center justify-center">
          <Icon w={18} h={18}>
            <path d="M1 4l4 4-4 4zM11 1h6l-3 4zM11 17h6l-3-4z" fill={GREY} />
            <path d="M2 8h8M6 6.500h11M6 11.500h11" stroke={GREY} strokeWidth="1.500" />
          </Icon>
        </button>
        <button type="button" disabled aria-label="Центр" className="flex h-[22px] w-[26px] items-center justify-center bg-[#fafafa]">
          <Icon w={18} h={10}>
            <path d="M8.500 5L4 0v10zM9.500 5L14 0v10z" fill={GREY} />
            <path d="M0 5h5M13 5h5" stroke={GREY} strokeWidth="2.500" />
          </Icon>
        </button>
      </div>
    </Group>
  );
}

function ControlGroup() {
  return (
    <Group title="Управление" tone="text-[#9cb4d0]" width="w-[175px]">
      <div className="-ml-px grid grid-cols-[34px_46px_46px_31px] gap-x-[3px] gap-y-[2px] pt-[3px]">
        <button type="button" disabled aria-label="Пауза" className="flex h-7 items-center justify-center rounded-[2px] border border-[#c4c4c4]">
          <Icon w={12} h={16}>
            <path d="M1.500 1h3v14h-3zM7.500 1h3v14h-3z" fill="#c0c0c0" stroke="#707070" />
          </Icon>
        </button>
        <button type="button" aria-label="Синус" className={CTRL}>
          <Icon w={30} h={20}>
            <path d="M1 10C5-1 10-2 15 10s10 11 14 0" stroke="#d02020" strokeWidth="1.200" />
          </Icon>
        </button>
        <button type="button" aria-label="Запись" className="flex h-7 items-center justify-center rounded-[2px] border border-[#d01818] bg-[#fff0f0]">
          <Icon w={34} h={20}>
            <path d="M1 2l2 6 2-3 2 3 1-6 2 6 2-3 2 3 1-6 2 6 2-3 2 3 1-6 2 6 2-3 2 1" stroke="#d02020" />
            <path d="M1 16l2-3 2 5 2-6 1 5 2-4 2 5 2-6 1 5 2-4 2 5 2-6 1 5 2-4 2 5 2-3" stroke="#1020c0" />
            <path d="M33 2v6l-4-3zM33 12v6l-4-3z" fill="#101060" />
          </Icon>
        </button>
        <button type="button" aria-label="Авто диапазон" className={CTRL}>
          <Icon w={26} h={24}>
            <text x="13" y="6" textAnchor="middle" fontSize="6" fontWeight="bold" fill="#000">AUTO</text>
            <circle cx="13" cy="15.500" r="6" fill="#f0f0f0" stroke="#202020" strokeWidth="1.400" strokeDasharray="2 .7" />
            <circle cx="13" cy="15.500" r="4" stroke="#606060" />
            <path d="M11 14l2 3.500 2-3.500" stroke="#101010" />
            <path d="M5 12c0-2 1-4 4-4M21 12c0-2-1-4-4-4" stroke="#1020c0" strokeWidth="1.400" />
          </Icon>
        </button>
        <button type="button" className={`${CTRL} col-span-2 gap-5 pr-1 text-[12px] font-bold`}>
          <Icon w={10} h={20}>
            <path d="M0 1v18l9.500-9z" fill="#08e018" stroke="#089010" strokeWidth=".5" />
          </Icon>
          Пуск
        </button>
        <output className="flex h-7 items-center justify-center rounded-[3px] border border-[#2060a0] bg-[#f6f6f6] text-[12px] font-bold text-[#108010]">
          107.06
        </output>
        <button type="button" aria-label="Авто пуск" className={CTRL}>
          <Icon w={26} h={24}>
            <text x="13" y="6" textAnchor="middle" fontSize="6" fontWeight="bold" fill="#000">AUTO</text>
            <path d="M3 12l5 3.500-5 3.500z" fill="#1020c0" />
            <path d="M4 15.500H1" stroke="#1020c0" strokeWidth="1.200" />
            <path d="M7 20c6 3 3-11 9-10" stroke="#c02020" strokeWidth="1.200" />
            <path d="M5 15.500h12" stroke="#1020c0" strokeDasharray="1 1" />
            <path d="M17.500 10.500v10l5-5z" fill="#10d020" stroke="#004008" />
          </Icon>
        </button>
      </div>
    </Group>
  );
}

function TimerGroup() {
  return (
    <Group title="Таймеры" tone="text-[#000080]" width="w-[68px]">
      <div className="flex flex-col gap-[2px] pl-1 pt-[3px]">
        <button type="button" aria-label="Таймер пуска" className={`${CTRL} w-[49px] gap-[5px]`}>
          <Icon w={24} h={24}>
            <circle cx="13" cy="12.500" r="10" fill="#f4f4f4" stroke="#202020" strokeWidth="1.200" />
            <path d="M13 14V7M13 14l5-6" stroke="#707070" strokeWidth="1.500" />
            <path d="M1 6h5V3l6 5-6 5v-3H1z" fill="#70d0c8" stroke="#104040" />
          </Icon>
          <Down />
        </button>
        <button type="button" aria-label="Таймер остановки" className={`${CTRL} w-[49px] gap-[5px]`}>
          <Icon w={24} h={24}>
            <circle cx="12" cy="12" r="10" fill="#f4f4f4" stroke="#202020" strokeWidth="1.200" />
            <path d="M12 13V6M12 13l5-6" stroke="#707070" strokeWidth="1.500" />
            <path d="M13 16h4v-3l6 5-6 5v-3h-4z" fill="#e030c8" stroke="#500048" />
          </Icon>
          <Down />
        </button>
      </div>
    </Group>
  );
}

function ControlPanel() {
  return (
    <section className="flex h-[89px] shrink-0 flex-col items-center border-b border-[#808080] bg-[#f0f0f0]">
      <div className="flex h-[7px] w-[670px] items-center gap-1 border border-[#a0a0a0] px-[5px]">
        <Icon w={6} h={3}>
          <path d="M0 0h6L3 3z" fill="#3c8ce0" />
        </Icon>
        <div className="h-px grow border-t border-dotted border-[#5a9ce0]" />
        <Icon w={6} h={3}>
          <path d="M0 0h6L3 3z" fill="#3c8ce0" />
        </Icon>
      </div>
      <div className="mr-1 mt-[4px] flex gap-[5px]">
        <ChannelGroup />
        <Group title="Частота" tone="text-[#000080]" width="w-[104px]">
          <div className="-ml-[5px] -mt-2">
            <Dial
              name="Частота"
              value="50K"
              pointer={-52}
              width={102}
              cx={50}
              labels={[
                ["1K", 18, 67, -130],
                ["100K", 12, 27, -46],
                ["250K", 46, 16, 3],
                ["333K", 67, 27, 46],
                ["500K", 75, 39, 68],
                ["1M", 71, 66, 130],
              ]}
            />
          </div>
        </Group>
        <SyncGroup />
        <ControlGroup />
        <TimerGroup />
      </div>
    </section>
  );
}

export default function App() {
  return (
    <main className="relative flex h-screen min-h-[560px] flex-col bg-white pb-[5px] pl-1 pr-3 pt-[35px] font-['Liberation_Sans',Arial,sans-serif] text-[11px] leading-[14px] text-black">
      <div className="pointer-events-none absolute left-1 right-2 top-[23px] text-center text-[20px] leading-6 text-[#000080]">
        <a href="http://diamag-osc.com" className="pointer-events-auto">
          http://diamag-osc.com
        </a>
      </div>
      <Header />
      <Tabs />
      <div className="flex min-h-0 grow flex-col border-x border-[#808080]">
        <Toolbar />
        <Chart />
        <ScrollRow />
        <ControlPanel />
      </div>
      <footer className="flex h-[18px] shrink-0 gap-[3px] bg-[#f0f0f0] pt-[2px]">
        <div className="w-[189px] border-l border-t border-[#a0a0a0] pl-[3px] pt-px leading-[13px]">
          USB Осциллограф не подключен
        </div>
        <div className="grow border-l border-t border-[#a0a0a0]" />
        <div className="w-12 border-l border-t border-[#a0a0a0] pl-[2px] pt-px leading-[13px]">1.9</div>
      </footer>
    </main>
  );
}
